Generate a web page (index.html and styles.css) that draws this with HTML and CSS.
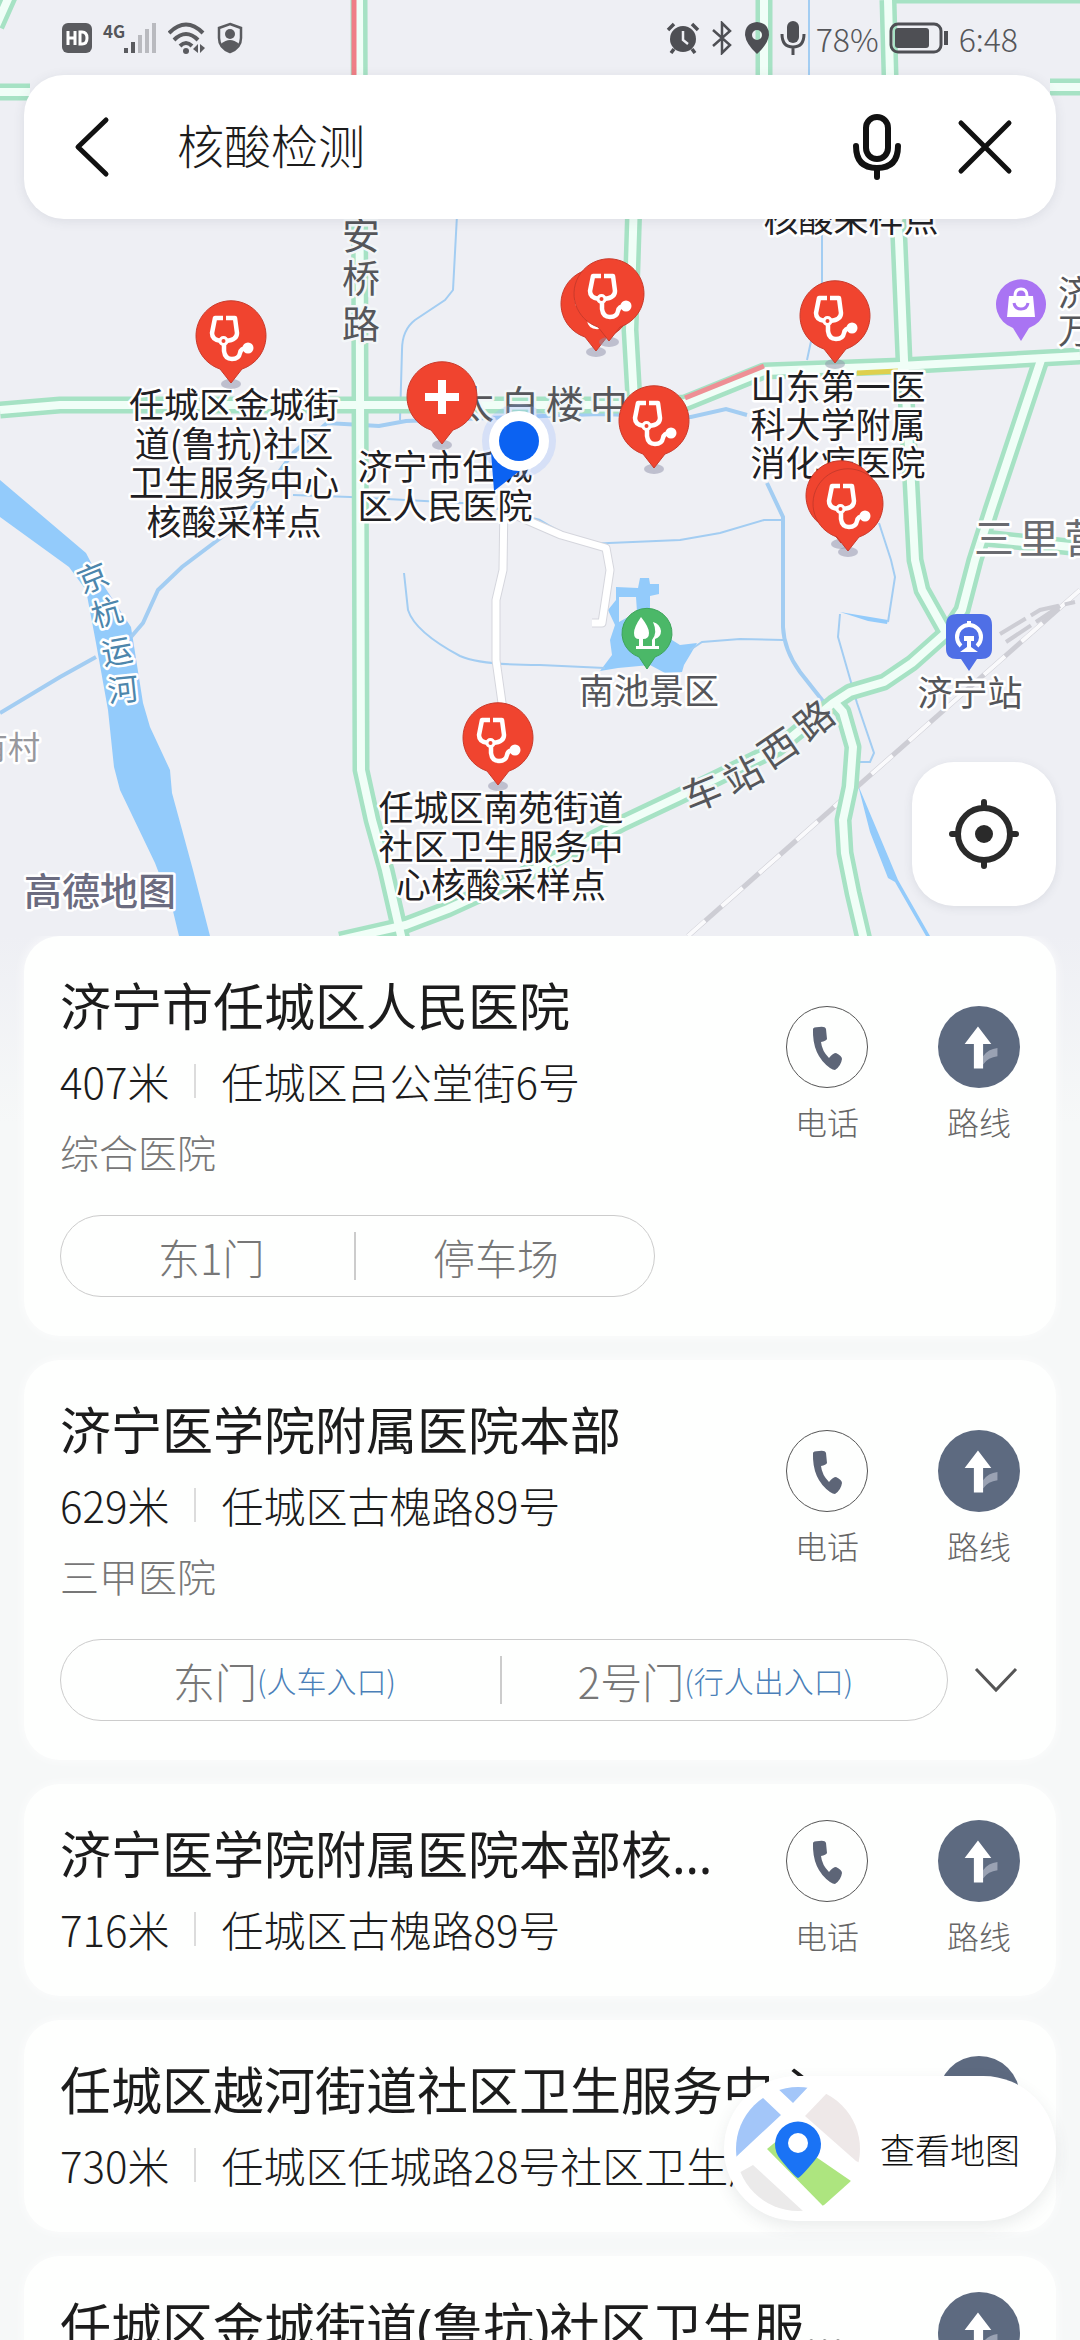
FILE: index.html
```html
<!DOCTYPE html>
<html lang="zh-CN">
<head>
<meta charset="utf-8">
<meta name="viewport" content="width=device-width, initial-scale=1">
<title>核酸检测</title>
<link rel="stylesheet" href="styles.css">
</head>
<body>
<svg class="defs" aria-hidden="true">
  <defs>
    <symbol id="pin" viewBox="-45 -45 90 105" overflow="visible">
      <ellipse cx="0" cy="48" rx="10" ry="5" fill="#8d8fa8" opacity=".5"/>
      <path d="M0 47 L-11 33 A35 35 0 1 1 11 33 Z" fill="#f0442f" stroke="#c93a2b" stroke-width="1"/>
    </symbol>
    <g id="stetho" fill="none" stroke="#fff" stroke-width="4.500" stroke-linejoin="round">
      <path d="M-8 -18 H-16 L-19 -3 Q-19 4 -10 5 M-5 -18 H4 L6 -3 Q6 4 -5 5"/>
      <circle cx="-7.500" cy="5" r="3.500" stroke-width="3"/>
      <path d="M-7 9 V15 Q-6 23 1 23 Q8 23 9 17 Q10 12 16 12"/>
      <circle cx="17" cy="12" r="5.500" fill="#fff" stroke="none"/>
    </g>
    <g id="clinic"><use href="#pin" x="-45" y="-45" width="90" height="105"/><use href="#stetho"/></g>
    <symbol id="phone" viewBox="-40 -40 80 80">
      <path d="M-14 -18 Q-14 -20 -8 -20 Q-2 -21 -1 -18 L0 -8 Q-1 -6 -6 -5 Q-5 4 2 11 Q6 6 9 6 Q15 9 15 12 Q14 19 8 23 Q6 23 3 21 Q-15 8 -14 -18Z" fill="#5d6577"/>
    </symbol>
    <symbol id="route" viewBox="-40 -40 80 80">
      <path d="M4 17 V9 Q9 2 18 1 V9 Q9 10 4 17Z" fill="#9aa2b3"/>
      <path d="M-1 -20 L12 -3 H4 V21 H-5 V-3 H-14Z" fill="#fff"/>
    </symbol>
  </defs>
</svg>

<div class="app">
  <section class="map">
    <svg class="map-canvas" viewBox="0 0 1080 936" preserveAspectRatio="xMidYMid slice" role="img" aria-label="地图">
      <rect width="1080" height="936" fill="#eeeff4"/>
      <g class="water-fill">
        <path d="M0 480 L86 553 L100 580 L131 627 L143 703 L150 727 L170 770 L172 793 L193 870 L210 936 H179 L172 907 L155 863 L120 790 L114 767 L108 710 L96 643 L86 590 L69 567 L0 517Z"/>
        <path fill-rule="evenodd" d="M616 587 L638 588 L640 578 H649 L650 584 H659 V594 L650 596 V612 L672 640 L680 645 L697 643 L690 655 L684 665 L682 672 L665 673 L650 665 L618 668 L600 671 L612 655 L610 640 L615 625 L608 610 L616 600Z M619 597 L636 597 L637 612 L619 622Z"/>
        <path d="M858 785 L877 830 L898 880 L930 936 H926 L895 882 L888 878 L870 832Z"/>
        <path d="M840 612 L888 620 L887 624 L868 621Z"/>
      </g>
      <g class="water-line">
        <path d="M0 713 L60 677 L96 657" stroke-width="4"/>
        <path d="M131 637 L143 623 L158 590 L182 567 L227 533 L253 507 L293 453 L327 423 L379 426 L406 421 L600 414 L691 417 L726 409 L747 415" stroke-width="4"/>
        <path d="M767 483 L783 517 V627 Q784 650 800 672 L826 705" stroke-width="4"/>
        <path d="M457 215 L453 290 L445 300 L415 320 Q402 330 402 350 L400 420" stroke-width="2"/>
        <path d="M293 495 L350 497 L480 504 L540 520 Q580 545 609 543 L680 540 L720 533 L764 520 H783" stroke-width="2"/>
        <path d="M404 573 L408 610 Q415 632 460 656 Q480 665 540 665 L605 668" stroke-width="2"/>
        <path d="M690 650 L702 642 L740 639 L783 640" stroke-width="2"/>
        <path d="M879 523 L891 560 L895 577 L888 622 M840 614 L838 637 L857 703 L874 753 L870 762 H860" stroke-width="2"/>
        <path d="M809 0 V75 M822 230 V290 L807 360" stroke-width="2"/>
      </g>
      <path d="M1080 590 L688 936" stroke="#cdcdd4" stroke-width="5" fill="none"/>
      <path d="M1080 590 L688 936" stroke="#fafafc" stroke-width="4" stroke-dasharray="28 22" fill="none"/>
      <path d="M1000 634 L1040 610 L1075 602 M1006 642 L1060 606" stroke="#cdcdd4" stroke-width="4" fill="none" stroke-dasharray="30 6"/>
      <g fill="none" stroke-linejoin="round">
        <g stroke="#d5d6dd" stroke-width="9">
          <path d="M504 500 L503 570 L496 600 V660 L503 710"/>
          <path d="M515 515 L561 535 L606 548 L610 570 L602 623 H592"/>
        </g>
        <g stroke="#fff" stroke-width="7">
          <path d="M504 500 L503 570 L496 600 V660 L503 710"/>
          <path d="M515 515 L561 535 L606 548 L610 570 L602 623 H592"/>
        </g>
      </g>
      <g class="road-edge">
        <path d="M359 0 L361 770 L372 820 L386 870 L402 940"/>
        <path d="M0 410 L60 405 H640 L685 403 L764 371 L900 366 L1080 356"/>
        <path d="M764 0 V90 M12 -10 L-4 26"/>
        <path d="M634 200 L630 330 L634 400"/>
        <path d="M888 0 L892 150 L899 240 L904 360 L911 483 L915 560 L922 590 L945 631"/>
        <path d="M1041 360 L991 510 L975 560 L962 610 L948 631 L912 663 L884 682 L850 692 L833 703 L778 748 L678 797 L623 823 L540 867 L448 909 L406 925 L340 940"/>
        <path d="M835 703 L843 712 L853 747 L850 787 L843 820 L845 853 L853 893 L864 940"/>
        <path d="M0 92 H30 M1050 87 H1080 M890 -5 H1080 M985 538 L1080 548"/>
      </g>
      <g class="road-core">
        <path d="M359 0 L361 770 L372 820 L386 870 L402 940"/>
        <path d="M0 410 L60 405 H640 L685 403 L764 371 L900 366 L1080 356"/>
        <path d="M764 0 V90 M12 -10 L-4 26"/>
        <path d="M634 200 L630 330 L634 400"/>
        <path d="M888 0 L892 150 L899 240 L904 360 L911 483 L915 560 L922 590 L945 631"/>
        <path d="M1041 360 L991 510 L975 560 L962 610 L948 631 L912 663 L884 682 L850 692 L833 703 L778 748 L678 797 L623 823 L540 867 L448 909 L406 925 L340 940"/>
        <path d="M835 703 L843 712 L853 747 L850 787 L843 820 L845 853 L853 893 L864 940"/>
        <path d="M0 92 H30 M1050 87 H1080 M890 -5 H1080 M985 538 L1080 548"/>
      </g>
      <path d="M354 0 V76" stroke="#ef7f86" stroke-width="5"/>
      <path d="M685 398 L764 366" stroke="#ee9095" stroke-width="5"/>
      <path d="M857 373 L898 371" stroke="#ded04e" stroke-width="5"/>

      <g class="label road-label">
        <text x="361" y="249">安</text><text x="361" y="292">桥</text><text x="361" y="338">路</text>
        <text x="475" y="418">太</text><text x="520" y="418">白</text><text x="565" y="418">楼</text><text x="609" y="418">中</text>
        <text transform="translate(702 793) rotate(-22)" y="14">车</text>
        <text transform="translate(743 775) rotate(-28)" y="14">站</text>
        <text transform="translate(778 748) rotate(-34)" y="14">西</text>
        <text transform="translate(814 720) rotate(-38)" y="14">路</text>
      </g>
      <g class="label area-label">
        <text x="994" y="553">三</text><text x="1039" y="553">里</text><text x="1084" y="553">营</text>
      </g>
      <g class="label river-label">
        <text transform="translate(93 578) rotate(-22)" y="11">京</text>
        <text transform="translate(107 613) rotate(-16)" y="11">杭</text>
        <text transform="translate(117 652) rotate(-10)" y="11">运</text>
        <text transform="translate(123 690) rotate(-6)" y="11">河</text>
      </g>
      <g class="label village-label"><text x="8" y="759">有村</text></g>

      <g class="label place-label">
        <text x="851" y="232">核酸采样点</text>
        <text x="234" y="418">任城区金城街</text><text x="234" y="457">道(鲁抗)社区</text><text x="234" y="496">卫生服务中心</text><text x="234" y="535">核酸采样点</text>
        <text x="445" y="480">济宁市任城</text><text x="445" y="519">区人民医院</text>
        <text x="838" y="400">山东第一医</text><text x="838" y="438">科大学附属</text><text x="838" y="476">消化病医院</text>
        <text x="501" y="821">任城区南苑街道</text><text x="501" y="860">社区卫生服务中</text><text x="501" y="898">心核酸采样点</text>
      </g>
      <g class="label poi-label">
        <text x="649" y="704">南池景区</text><text x="970" y="706">济宁站</text>
        <text x="1093" y="306">济宁</text><text x="1093" y="344">万达</text>
      </g>
      <g class="label brand-label"><text x="100" y="905">高德地图</text></g>

      <g transform="translate(1021 304)">
        <path d="M0 37 L-8 24 A25 25 0 1 1 8 24Z" fill="#a974f3"/>
        <path d="M-12 -8 H12 L14 13 H-14Z" fill="#fff"/>
        <path d="M-6 -8 Q-6 -15 0 -15 Q6 -15 6 -8" fill="none" stroke="#fff" stroke-width="3"/>
        <path d="M-7 -1 Q-6 5 0 5 Q6 5 7 -1" fill="none" stroke="#a974f3" stroke-width="3"/>
      </g>
      <g transform="translate(647 633)">
        <path d="M0 36 L-8 24 A25 25 0 1 1 8 24Z" fill="#4bb868" stroke="#3da45a"/>
        <path d="M-6 -16 Q-13 -6 -13 0 Q-13 6 -8 6 V13 H-11 V16 H12 V13 H8 V6 Q14 4 14 -2 Q13 -9 6 -11 Q11 0 5 7 V13 H-4 V6 Q2 6 2 0 Q2 -6 -6 -16Z" fill="#fff"/>
      </g>
      <g transform="translate(969 637)">
        <path d="M-12 -23 H12 Q23 -23 23 -12 V12 Q23 22 12 22 H8 L0 34 L-8 22 H-12 Q-23 22 -23 12 V-12 Q-23 -23 -12 -23Z" fill="#4f6fe6"/>
        <path d="M-8 9 A12 12 0 1 1 8 9" fill="none" stroke="#fff" stroke-width="4"/>
        <path d="M-2 -16 H2 V-12 H-2Z M-5 -1 H5 V4 H2 V10 L9 15 H-9 L-2 10 V4 H-5Z" fill="#fff"/>
      </g>

      <use href="#clinic" transform="translate(596 304)"/>
      <use href="#clinic" transform="translate(609 294)"/>
      <use href="#clinic" transform="translate(231 336)"/>
      <use href="#clinic" transform="translate(835 316)"/>
      <use href="#clinic" transform="translate(654 421)"/>
      <use href="#pin" transform="translate(841 496)" x="-45" y="-45" width="90" height="105"/>
      <use href="#clinic" transform="translate(848 504)"/>
      <use href="#clinic" transform="translate(498 738)"/>
      <g transform="translate(442 397)">
        <use href="#pin" x="-45" y="-45" width="90" height="105"/>
        <path d="M-4 -17 H4 V-4 H17 V4 H4 V17 H-4 V4 H-17 V-4 H-4Z" fill="#fff"/>
      </g>
      <circle cx="519" cy="441" r="37" fill="#8fb4ff" opacity=".25"/>
      <path d="M491 452 L494 491 L526 466Z" fill="#0b62f2"/>
      <circle cx="519" cy="441" r="30" fill="#fff"/>
      <circle cx="519" cy="441" r="20" fill="#0b62f2"/>
    </svg>

    <header class="status">
      <div class="status-group">
        <svg width="30" height="30" viewBox="0 0 30 30"><rect width="30" height="30" rx="6" fill="#5a5b5f"/><path d="M6 8 V22 M13 8 V22 M6 15 H13 M18 9 V21 H20 Q25 21 25 15 Q25 9 20 9Z" fill="none" stroke="#fff" stroke-width="3"/></svg>
        <span class="net">4G</span>
        <svg class="signal" width="34" height="30" viewBox="0 0 34 30"><path d="M1 30 V25 H5 V30Z M8 30 V19 H12 V30Z" fill="#5a5b5f"/><path d="M15 30 V12 H19 V30Z M22 30 V6 H26 V30Z M29 30 V0 H33 V30Z" fill="#b9babf"/></svg>
        <svg width="38" height="32" viewBox="0 0 38 32"><g fill="none" stroke="#5a5b5f" stroke-width="4"><path d="M1 11 Q18 -6 35 11"/><path d="M6 18 Q18 6 30 18"/><path d="M12 24 Q18 18 24 24"/></g><circle cx="18" cy="29" r="3" fill="#5a5b5f"/><path d="M30 22 V31 L25 27Z M32 22 V31 L37 26Z" fill="#5a5b5f"/></svg>
        <svg width="26" height="32" viewBox="0 0 26 32"><path d="M13 2 L24 6 V16 Q24 26 13 30 Q2 26 2 16 V6Z" fill="none" stroke="#5a5b5f" stroke-width="2.500"/><circle cx="13" cy="12" r="5" fill="#5a5b5f"/><path d="M4 22 Q13 14 22 22 Q19 27 13 30 Q7 27 4 22Z" fill="#5a5b5f"/></svg>
      </div>
      <div class="status-group right">
        <svg width="34" height="32" viewBox="0 0 34 32"><circle cx="17" cy="17" r="13" fill="#4e4f54"/><path d="M2 8 L8 2 M32 8 L26 2 M8 27 L5 31 M26 27 L29 31" stroke="#4e4f54" stroke-width="3.500"/><path d="M17 9 V18 L22 22" stroke="#eeeff4" stroke-width="2.500" fill="none"/></svg>
        <svg width="24" height="34" viewBox="0 0 24 34"><path d="M3 9 L20 24 L12 32 V2 L20 10 L3 25" fill="none" stroke="#4e4f54" stroke-width="2.500"/></svg>
        <svg width="26" height="32" viewBox="0 0 26 32"><path fill-rule="evenodd" d="M13 0 Q25 1 25 13 Q24 22 13 32 Q2 22 1 13 Q1 1 13 0Z M13 8 A5 5 0 1 0 13 18 A5 5 0 1 0 13 8Z" fill="#4e4f54"/></svg>
        <svg width="26" height="34" viewBox="0 0 26 34"><rect x="7" y="0" width="12" height="22" rx="6" fill="#4e4f54"/><path d="M2 13 Q2 26 13 26 Q24 26 24 13 M13 26 V34" fill="none" stroke="#4e4f54" stroke-width="3"/></svg>
        <span class="pct">78%</span>
        <svg width="60" height="32" viewBox="0 0 60 32"><rect x="2" y="2" width="50" height="28" rx="7" fill="none" stroke="#4e4f54" stroke-width="3"/><rect x="6" y="6" width="34" height="20" rx="3" fill="#4e4f54"/><path d="M57 9 V23" stroke="#4e4f54" stroke-width="4"/></svg>
        <time>6:48</time>
      </div>
    </header>

    <form class="search" role="search">
      <button type="button" class="icon-btn" aria-label="返回"><svg width="60" height="66" viewBox="0 0 60 66"><path d="M42 6 L14 33 L42 60" fill="none" stroke="#111" stroke-width="5" stroke-linecap="round" stroke-linejoin="round"/></svg></button>
      <input type="text" value="核酸检测" aria-label="搜索">
      <button type="button" class="icon-btn" aria-label="语音"><svg width="60" height="66" viewBox="0 0 60 66"><g fill="none" stroke="#111" stroke-width="6" stroke-linecap="round"><rect x="20" y="3" width="22" height="42" rx="11"/><path d="M10 32 Q10 54 31 54 Q52 54 52 32 M31 56 V63"/></g></svg></button>
      <button type="button" class="icon-btn close" aria-label="关闭"><svg width="60" height="66" viewBox="0 0 60 66"><path d="M7 9 L55 57 M55 9 L7 57" stroke="#111" stroke-width="5" stroke-linecap="round"/></svg></button>
    </form>

    <button type="button" class="locate" aria-label="定位"><svg width="76" height="76" viewBox="-38 -38 76 76"><circle r="26" fill="none" stroke="#2a2a2a" stroke-width="6"/><circle r="9" fill="#2a2a2a"/><path d="M0 -32 V-26 M0 32 V26 M-32 0 H-26 M32 0 H26" stroke="#2a2a2a" stroke-width="6" stroke-linecap="round"/></svg></button>
  </section>

  <main class="results">
    <article class="card">
      <div class="top">
        <div class="info">
          <h2>济宁市任城区人民医院</h2>
          <p class="addr"><span>407米</span><span class="street">任城区吕公堂街6号</span></p>
          <p class="kind">综合医院</p>
        </div>
        <div class="actions">
          <button type="button" class="action"><svg class="disc ring"><use href="#phone"/></svg>电话</button>
          <button type="button" class="action"><svg class="disc solid"><use href="#route"/></svg>路线</button>
        </div>
      </div>
      <div class="gates">
        <div class="pill short"><button type="button">东1门</button><button type="button">停车场</button></div>
      </div>
    </article>

    <article class="card">
      <div class="top">
        <div class="info">
          <h2>济宁医学院附属医院本部</h2>
          <p class="addr"><span>629米</span><span class="street">任城区古槐路89号</span></p>
          <p class="kind">三甲医院</p>
        </div>
        <div class="actions">
          <button type="button" class="action"><svg class="disc ring"><use href="#phone"/></svg>电话</button>
          <button type="button" class="action"><svg class="disc solid"><use href="#route"/></svg>路线</button>
        </div>
      </div>
      <div class="gates">
        <div class="pill"><button type="button">东门<small>(人车入口)</small></button><button type="button">2号门<small>(行人出入口)</small></button></div>
        <button type="button" class="more" aria-label="展开"><svg width="48" height="32" viewBox="0 0 48 32"><path d="M4 5 L24 26 L44 5" fill="none" stroke="#555" stroke-width="3"/></svg></button>
      </div>
    </article>

    <article class="card">
      <div class="top">
        <div class="info">
          <h2>济宁医学院附属医院本部核酸采样点</h2>
          <p class="addr"><span>716米</span><span class="street">任城区古槐路89号</span></p>
        </div>
        <div class="actions">
          <button type="button" class="action"><svg class="disc ring"><use href="#phone"/></svg>电话</button>
          <button type="button" class="action"><svg class="disc solid"><use href="#route"/></svg>路线</button>
        </div>
      </div>
    </article>

    <article class="card">
      <div class="top">
        <div class="info">
          <h2>任城区越河街道社区卫生服务中心</h2>
          <p class="addr"><span>730米</span><span class="street">任城区任城路28号社区卫生服务中心</span></p>
        </div>
        <div class="actions">
          <button type="button" class="action"><svg class="disc solid"><use href="#route"/></svg>路线</button>
        </div>
      </div>
    </article>

    <article class="card">
      <div class="top">
        <div class="info">
          <h2>任城区金城街道(鲁抗)社区卫生服务中心核酸采样点</h2>
          <p class="addr"><span>1.1公里</span><span class="street">任城区金城街道</span></p>
        </div>
        <div class="actions">
          <button type="button" class="action"><svg class="disc solid"><use href="#route"/></svg>路线</button>
        </div>
      </div>
    </article>
  </main>

  <button type="button" class="view-map">
    <svg width="124" height="124" viewBox="-62 -62 124 124">
      <clipPath id="round"><circle r="62"/></clipPath>
      <g clip-path="url(#round)">
        <path d="M-24 -64 H12 L-5 -46Z M-36 -52 L-17 -34 L-62 8 L-80 -20Z" fill="#a3c6f9"/>
        <path d="M7 -33 L30 -57 L70 -40 V18 L58 12Z" fill="#eee8e8"/>
        <path d="M-45 16 L5 62 L-40 70 L-70 30Z" fill="#ebeaea"/>
        <path d="M-31 0 L-14 -14 L53 32 L25 57Z" fill="#ade57f"/>
      </g>
      <path d="M0 29 Q-3 28 -17 11 A23 23 0 1 1 17 11 Q3 28 0 29Z" fill="#1a73f5"/>
      <circle cy="-6" r="10" fill="#fff"/>
    </svg>
    <span>查看地图</span>
  </button>
</div>
</body>
</html>
```
FILE: styles.css
```css
* { box-sizing: border-box; }

body {
  margin: 0;
  font-family: "Noto Sans CJK SC", sans-serif;
  font-weight: 300;
  color: #1c1c1c;
}

button {
  margin: 0;
  padding: 0;
  border: 0;
  background: none;
  font: inherit;
  color: inherit;
}

svg { display: block; flex: none; }
.defs { position: absolute; width: 0; height: 0; }

.app {
  position: relative;
  display: flex;
  flex-direction: column;
  height: 100vh;
  overflow: hidden;
  background: linear-gradient(#eeeff4 40%, #f6f8f8 48%);
}

/* Map */
.map {
  position: relative;
  flex: none;
  height: 40vh;
  overflow: hidden;
}
.map-canvas {
  position: absolute;
  inset: 0;
  width: 100%;
  height: 100%;
}
.water-fill { fill: #93cbfb; }
.water-line { fill: none; stroke: #a3cdf2; }
.road-edge, .road-core { fill: none; stroke-linejoin: round; }
.road-edge { stroke: #a6e2c4; stroke-width: 17; }
.road-core { stroke: #f0fef7; stroke-width: 8; }

.label {
  text-anchor: middle;
  font-size: 35px;
  font-weight: 400;
  stroke: #fff;
  stroke-width: 5px;
  stroke-linejoin: round;
  paint-order: stroke;
}
.place-label { fill: #1f2023; }
.poi-label { fill: #55565a; }
.road-label { fill: #55565a; font-size: 38px; stroke: #f3f6f8; }
.area-label { fill: #6a6b70; font-size: 40px; }
.river-label { fill: #4d86ac; font-size: 31px; }
.village-label { fill: #97989d; font-size: 32px; }
.brand-label { fill: #6b6c80; font-size: 38px; font-weight: 500; }

/* Status bar */
.status {
  position: relative;
  display: flex;
  justify-content: space-between;
  align-items: center;
  height: 75px;
  padding: 0 62px;
  color: #55565a;
}
.status-group { display: flex; align-items: center; gap: 11px; }
.status-group.right { gap: 10px; }
.net { align-self: flex-start; font-size: 17px; line-height: 17px; font-weight: 700; }
.signal { margin-left: -13px; }
.pct, time { font-size: 32px; line-height: 40px; }

/* Search */
.search {
  position: relative;
  display: flex;
  align-items: center;
  height: 144px;
  margin: 0 24px;
  padding: 0 42px 0 40px;
  border-radius: 40px;
  background: #fff;
  box-shadow: 0 2px 12px rgba(60, 70, 90, .1);
}
.search input {
  flex: 1;
  min-width: 0;
  margin: 0 0 0 53px;
  padding: 0 0 6px;
  border: 0;
  outline: 0;
  background: none;
  font: inherit;
  font-size: 47px;
  line-height: 70px;
  color: inherit;
}
.close { margin-left: 48px; }

.locate {
  position: absolute;
  right: 24px;
  bottom: 30px;
  display: grid;
  place-items: center;
  width: 144px;
  height: 144px;
  border-radius: 42px;
  background: #fff;
  box-shadow: 0 2px 10px rgba(60, 70, 90, .1);
}

/* Results */
.results {
  display: flex;
  flex: 1;
  flex-direction: column;
  gap: 24px;
  min-height: 0;
  padding: 0 24px;
  overflow: hidden;
}
.card {
  flex: none;
  padding: 30px 36px 37px;
  border-radius: 36px;
  background: #fefffe;
  box-shadow: 0 0 12px rgba(255, 255, 255, .8);
}
.top { display: flex; align-items: center; gap: 48px; }
.info { flex: 1; min-width: 0; }
.info h2, .info p {
  margin: 0;
  overflow: hidden;
  white-space: nowrap;
  text-overflow: ellipsis;
}
.info h2 {
  font-family: "Noto Sans", "Noto Sans CJK SC", sans-serif;
  font-size: 51px;
  line-height: 80px;
  font-weight: 400;
}
.info .addr {
  display: flex;
  align-items: center;
  margin-top: 5px;
  font-size: 42px;
  line-height: 60px;
}
.street {
  display: flex;
  align-items: center;
  gap: 25px;
}
.street::before {
  content: "";
  width: 2px;
  height: 34px;
  margin-left: 25px;
  background: #dcdcdc;
}
.info .kind {
  margin-top: 12px;
  font-size: 39px;
  line-height: 56px;
  color: #777;
}
.actions { display: flex; gap: 70px; }
.action {
  display: flex;
  flex-direction: column;
  align-items: center;
  gap: 15px;
  width: 82px;
  font-size: 32px;
  line-height: 36px;
  color: #666;
}
.disc { width: 82px; height: 82px; border-radius: 50%; }
.ring { border: 1px solid #555; }
.solid { background: #5d6a80; }

.gates {
  display: flex;
  align-items: center;
  gap: 24px;
  margin: 36px 0 2px;
}
.pill {
  display: flex;
  flex: 1;
  height: 82px;
  border: 1px solid #ccc;
  border-radius: 41px;
  font-size: 42px;
  color: #777;
}
.pill.short { flex: none; width: 62%; }
.pill button {
  position: relative;
  display: flex;
  flex: 1;
  justify-content: center;
  align-items: center;
  padding-left: 8px;
}
.pill button + button { padding: 0 16px 0 0; }
.pill button + button::before {
  content: "";
  position: absolute;
  left: 0;
  width: 2px;
  height: 48px;
  background: #ccc;
}
.pill small { font-size: 30px; color: #4a7fb8; }

.view-map {
  position: absolute;
  right: 24px;
  bottom: 119px;
  display: flex;
  align-items: center;
  gap: 20px;
  height: 145px;
  padding: 0 36px 0 12px;
  border-radius: 73px;
  background: #fff;
  box-shadow: 0 6px 16px rgba(60, 70, 80, .1);
  font-size: 35px;
  color: #111;
}
```
